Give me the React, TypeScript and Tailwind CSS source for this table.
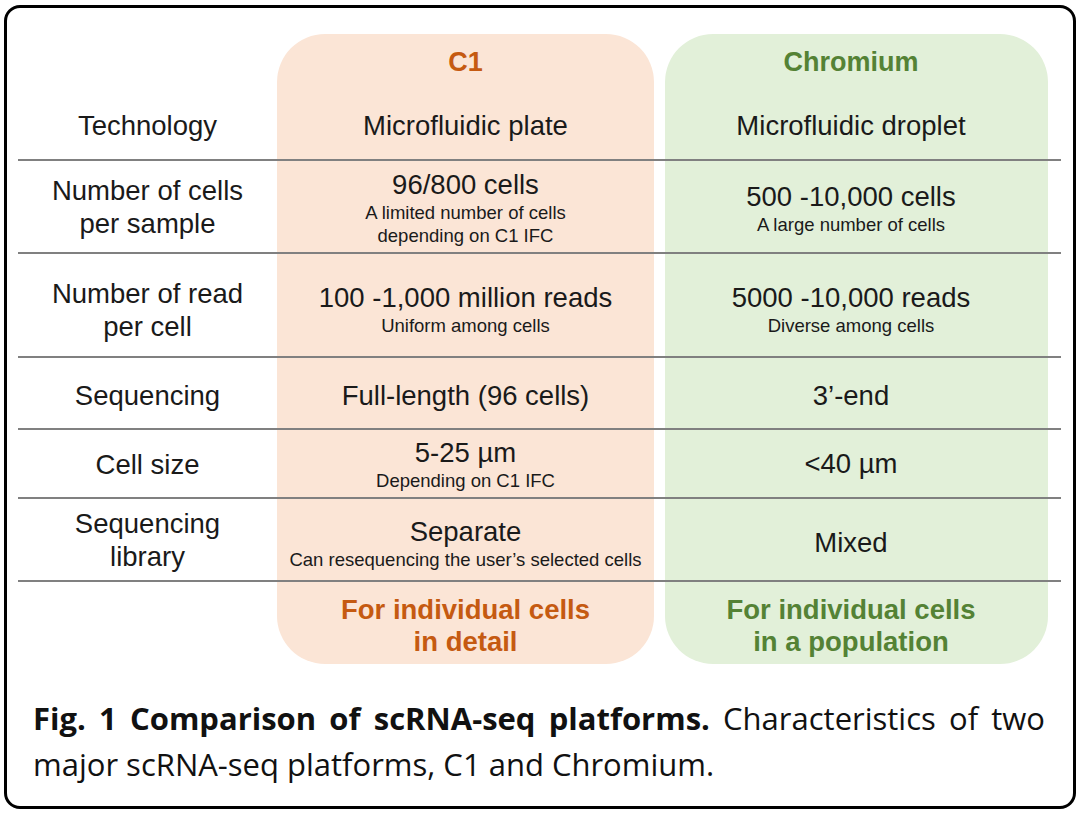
import React from 'react';

type Cell = { main: string[]; sub?: string[] };
type Row = { h: string; label: string[]; c1: Cell; cr: Cell; pad?: string; valPad?: string };

const rows: Row[] = [
  { h: 'h-[69px]', label: ['Technology'], c1: { main: ['Microfluidic plate'] }, cr: { main: ['Microfluidic droplet'] } },
  {
    h: 'h-[93px]',
    label: ['Number of cells', 'per sample'],
    c1: { main: ['96/800 cells'], sub: ['A limited number of cells', 'depending on C1 IFC'] },
    cr: { main: ['500 -10,000 cells'], sub: ['A large number of cells'] },
    valPad: 'pt-[3px]',
  },
  {
    h: 'h-[104px]',
    label: ['Number of read', 'per cell'],
    c1: { main: ['100 -1,000 million reads'], sub: ['Uniform among cells'] },
    cr: { main: ['5000 -10,000 reads'], sub: ['Diverse among cells'] },
    pad: 'pt-[9px]',
    valPad: 'pt-[8px]',
  },
  { h: 'h-[72px]', label: ['Sequencing'], c1: { main: ['Full-length (96 cells)'] }, cr: { main: ['3\u2019-end'] }, pad: 'pt-[5px]', valPad: 'pt-[5px]' },
  {
    h: 'h-[69px]',
    label: ['Cell size'],
    c1: { main: ['5-25 \u00b5m'], sub: ['Depending on C1 IFC'] },
    cr: { main: ['<40 \u00b5m'] },
    pad: 'pt-[1px]',
    valPad: 'pt-[1px]',
  },
  {
    h: 'h-[83px]',
    label: ['Sequencing', 'library'],
    c1: { main: ['Separate'], sub: ['Can resequencing the user\u2019s selected cells'] },
    cr: { main: ['Mixed'] },
    valPad: 'pt-[7px]',
  },
];

function CellText({ cell }: { cell: Cell }) {
  return (
    <div className="flex flex-col items-center text-center">
      {cell.main.map(t => (
        <div key={t} className="text-[27.5px] leading-[32px] whitespace-nowrap">{t}</div>
      ))}
      {cell.sub?.map(t => (
        <div key={t} className="text-[18.5px] leading-[23px] whitespace-nowrap">{t}</div>
      ))}
    </div>
  );
}

export default function App() {
  return (
    <div className="w-[1080px] h-[817px] bg-white pt-[5px] pl-[4px] pr-[4px] pb-[8px]" style={{ fontFamily: '"Liberation Sans", Arial, sans-serif' }}>
      <div className="h-full border-[3px] border-black rounded-[16px] pt-[26px] pl-[11px] pr-[12px] text-[#1a1a1a]">
        <div className="grid grid-cols-[259px_377px_11px_383px_13px]">
          {/* header */}
          <div className="h-[58px]" />
          <div className="h-[58px] bg-[#fbe5d6] rounded-t-[48px] flex items-center justify-center pb-[2px] text-[27px] font-bold text-[#c55a11]">C1</div>
          <div />
          <div className="h-[58px] bg-[#e2f0d9] rounded-t-[48px] flex items-center justify-center pr-[11px] pb-[2px] text-[27px] font-bold text-[#548235]">Chromium</div>
          <div />

          {rows.map((r, i) => (
            <React.Fragment key={i}>
              <div className={`${r.h} ${r.pad ?? ''} border-b-2 border-[#808080] flex flex-col items-center justify-center text-center`}>
                {r.label.map(t => (
                  <div key={t} className="text-[27.5px] leading-[33px] whitespace-nowrap">{t}</div>
                ))}
              </div>
              <div className={`${r.h} ${r.valPad ?? ''} border-b-2 border-[#808080] bg-[#fbe5d6] flex items-center justify-center`}>
                <CellText cell={r.c1} />
              </div>
              <div className={`${r.h} border-b-2 border-[#808080]`} />
              <div className={`${r.h} ${r.valPad ?? ''} border-b-2 border-[#808080] bg-[#e2f0d9] flex items-center justify-center pr-[11px]`}>
                <CellText cell={r.cr} />
              </div>
              <div className={`${r.h} border-b-2 border-[#808080]`} />
            </React.Fragment>
          ))}

          {/* footer */}
          <div className="h-[82px]" />
          <div className="h-[82px] bg-[#fbe5d6] rounded-b-[48px] flex flex-col items-center justify-center text-[27.5px] leading-[32px] font-bold text-[#c55a11] pt-[6px]">
            <div>For individual cells</div>
            <div>in detail</div>
          </div>
          <div />
          <div className="h-[82px] bg-[#e2f0d9] rounded-b-[48px] flex flex-col items-center justify-center pr-[11px] text-[27.5px] leading-[32px] font-bold text-[#548235] pt-[6px]">
            <div>For individual cells</div>
            <div>in a population</div>
          </div>
          <div />
        </div>

        <div className="mt-[31px] pl-[15px] pr-[16px] text-[31px] leading-[46px] text-[#111]" style={{ fontFamily: '"Open Sans", "Noto Sans", sans-serif' }}>
          <div className="text-justify [text-align-last:justify]">
            <span className="font-bold">Fig. 1 Comparison of scRNA-seq platforms.</span> Characteristics of two
          </div>
          <div>major scRNA-seq platforms, C1 and Chromium.</div>
        </div>
      </div>
    </div>
  );
}
